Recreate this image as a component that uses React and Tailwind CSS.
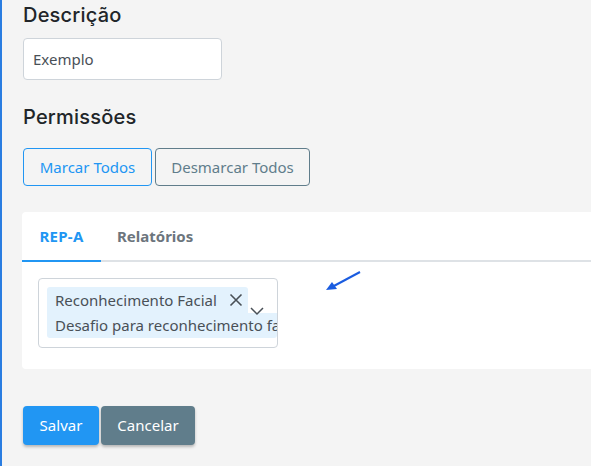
import React from "react";

export default function App() {
  return (
    <div className="w-[591px] h-[466px] overflow-hidden bg-[#f4f4f4] border-l-[2px] border-[#2a7de1] flex flex-col" style={{ fontFamily: "'Noto Sans', sans-serif" }}>
      <div className="pl-[21px] flex flex-col">
        <h2 className="text-[20px] leading-[24px] font-medium text-[#212529] mt-[3px] tracking-[0.2px]" style={{ fontFamily: "Inter, 'Noto Sans', sans-serif" }}>Descrição</h2>
        <div className="mt-[11px] w-[199px] h-[42px] bg-white border border-[#ced4da] rounded-[4px] flex items-center pl-[9px] text-[15px] text-[#495057]">Exemplo</div>
        <h2 className="mt-[25px] text-[20px] leading-[24px] font-medium text-[#212529] tracking-[0.2px]" style={{ fontFamily: "Inter, 'Noto Sans', sans-serif" }}>Permissões</h2>
        <div className="mt-[19px] flex gap-[3px]">
          <button className="w-[129px] h-[38px] border border-[#2196f3] rounded-[4px] text-[#2196f3] text-[15px]">Marcar Todos</button>
          <button className="w-[155px] h-[38px] border border-[#607d8b] rounded-[4px] text-[#607d8b] text-[15px]">Desmarcar Todos</button>
        </div>
      </div>
      <div className="mt-[26px] ml-[20px] h-[157px] bg-white rounded-l-[4px] relative">
        <div className="h-[50px] flex border-b-2 border-[#dee2e6]">
          <div className="w-[79px] h-[50px] -mb-[2px] border-b-2 border-[#2196f3] flex items-center justify-center text-[15px] font-bold text-[#2196f3] tracking-[0.3px]">REP-A</div>
          <div className="ml-[16px] flex items-center text-[15px] font-bold text-[#6c757d]">Relatórios</div>
        </div>
        <div className="mt-[16px] ml-[16px] w-[240px] h-[70px] border border-[#ced4da] rounded-[4px] pt-[8px] pl-[8px] overflow-hidden relative">
          <div className="w-[201px] h-[26px] bg-[#e3f2fd] rounded-t-[3px] flex items-center pl-[8px] text-[15px] text-[#495057] whitespace-nowrap">
            Reconhecimento Facial
            <svg className="ml-[12px]" width="14" height="14" viewBox="0 0 14 14"><path d="M1.5 1.5 L12.5 12.5 M12.5 1.5 L1.5 12.5" stroke="#495057" strokeWidth="1.6" /></svg>
          </div>
          <div className="h-[25px] bg-[#e3f2fd] rounded-b-[3px] flex items-center pl-[8px] text-[15px] text-[#495057] whitespace-nowrap">Desafio para reconhecimento facial</div>
          <svg className="absolute left-[211px] top-[28px]" width="14" height="9" viewBox="0 0 14 9"><path d="M1 1 L7 7 L13 1" stroke="#495057" strokeWidth="1.5" fill="none" /></svg>
        </div>
        <svg className="absolute left-[302px] top-[58px]" width="38" height="22" viewBox="0 0 38 22">
          <path d="M36 2 L8 17" stroke="#1a5ce0" strokeWidth="2" />
          <path d="M2 20 L13 19 L8 12 Z" fill="#1a5ce0" />
        </svg>
      </div>
      <div className="mt-[37px] ml-[21px] flex gap-[2px]">
        <button className="w-[76px] h-[39px] bg-[#2196f3] rounded-[4px] text-white text-[15px] shadow-[0_2px_3px_rgba(0,0,0,0.25)]">Salvar</button>
        <button className="w-[94px] h-[39px] bg-[#607d8b] rounded-[4px] text-white text-[15px] shadow-[0_2px_3px_rgba(0,0,0,0.25)]">Cancelar</button>
      </div>
    </div>
  );
}
